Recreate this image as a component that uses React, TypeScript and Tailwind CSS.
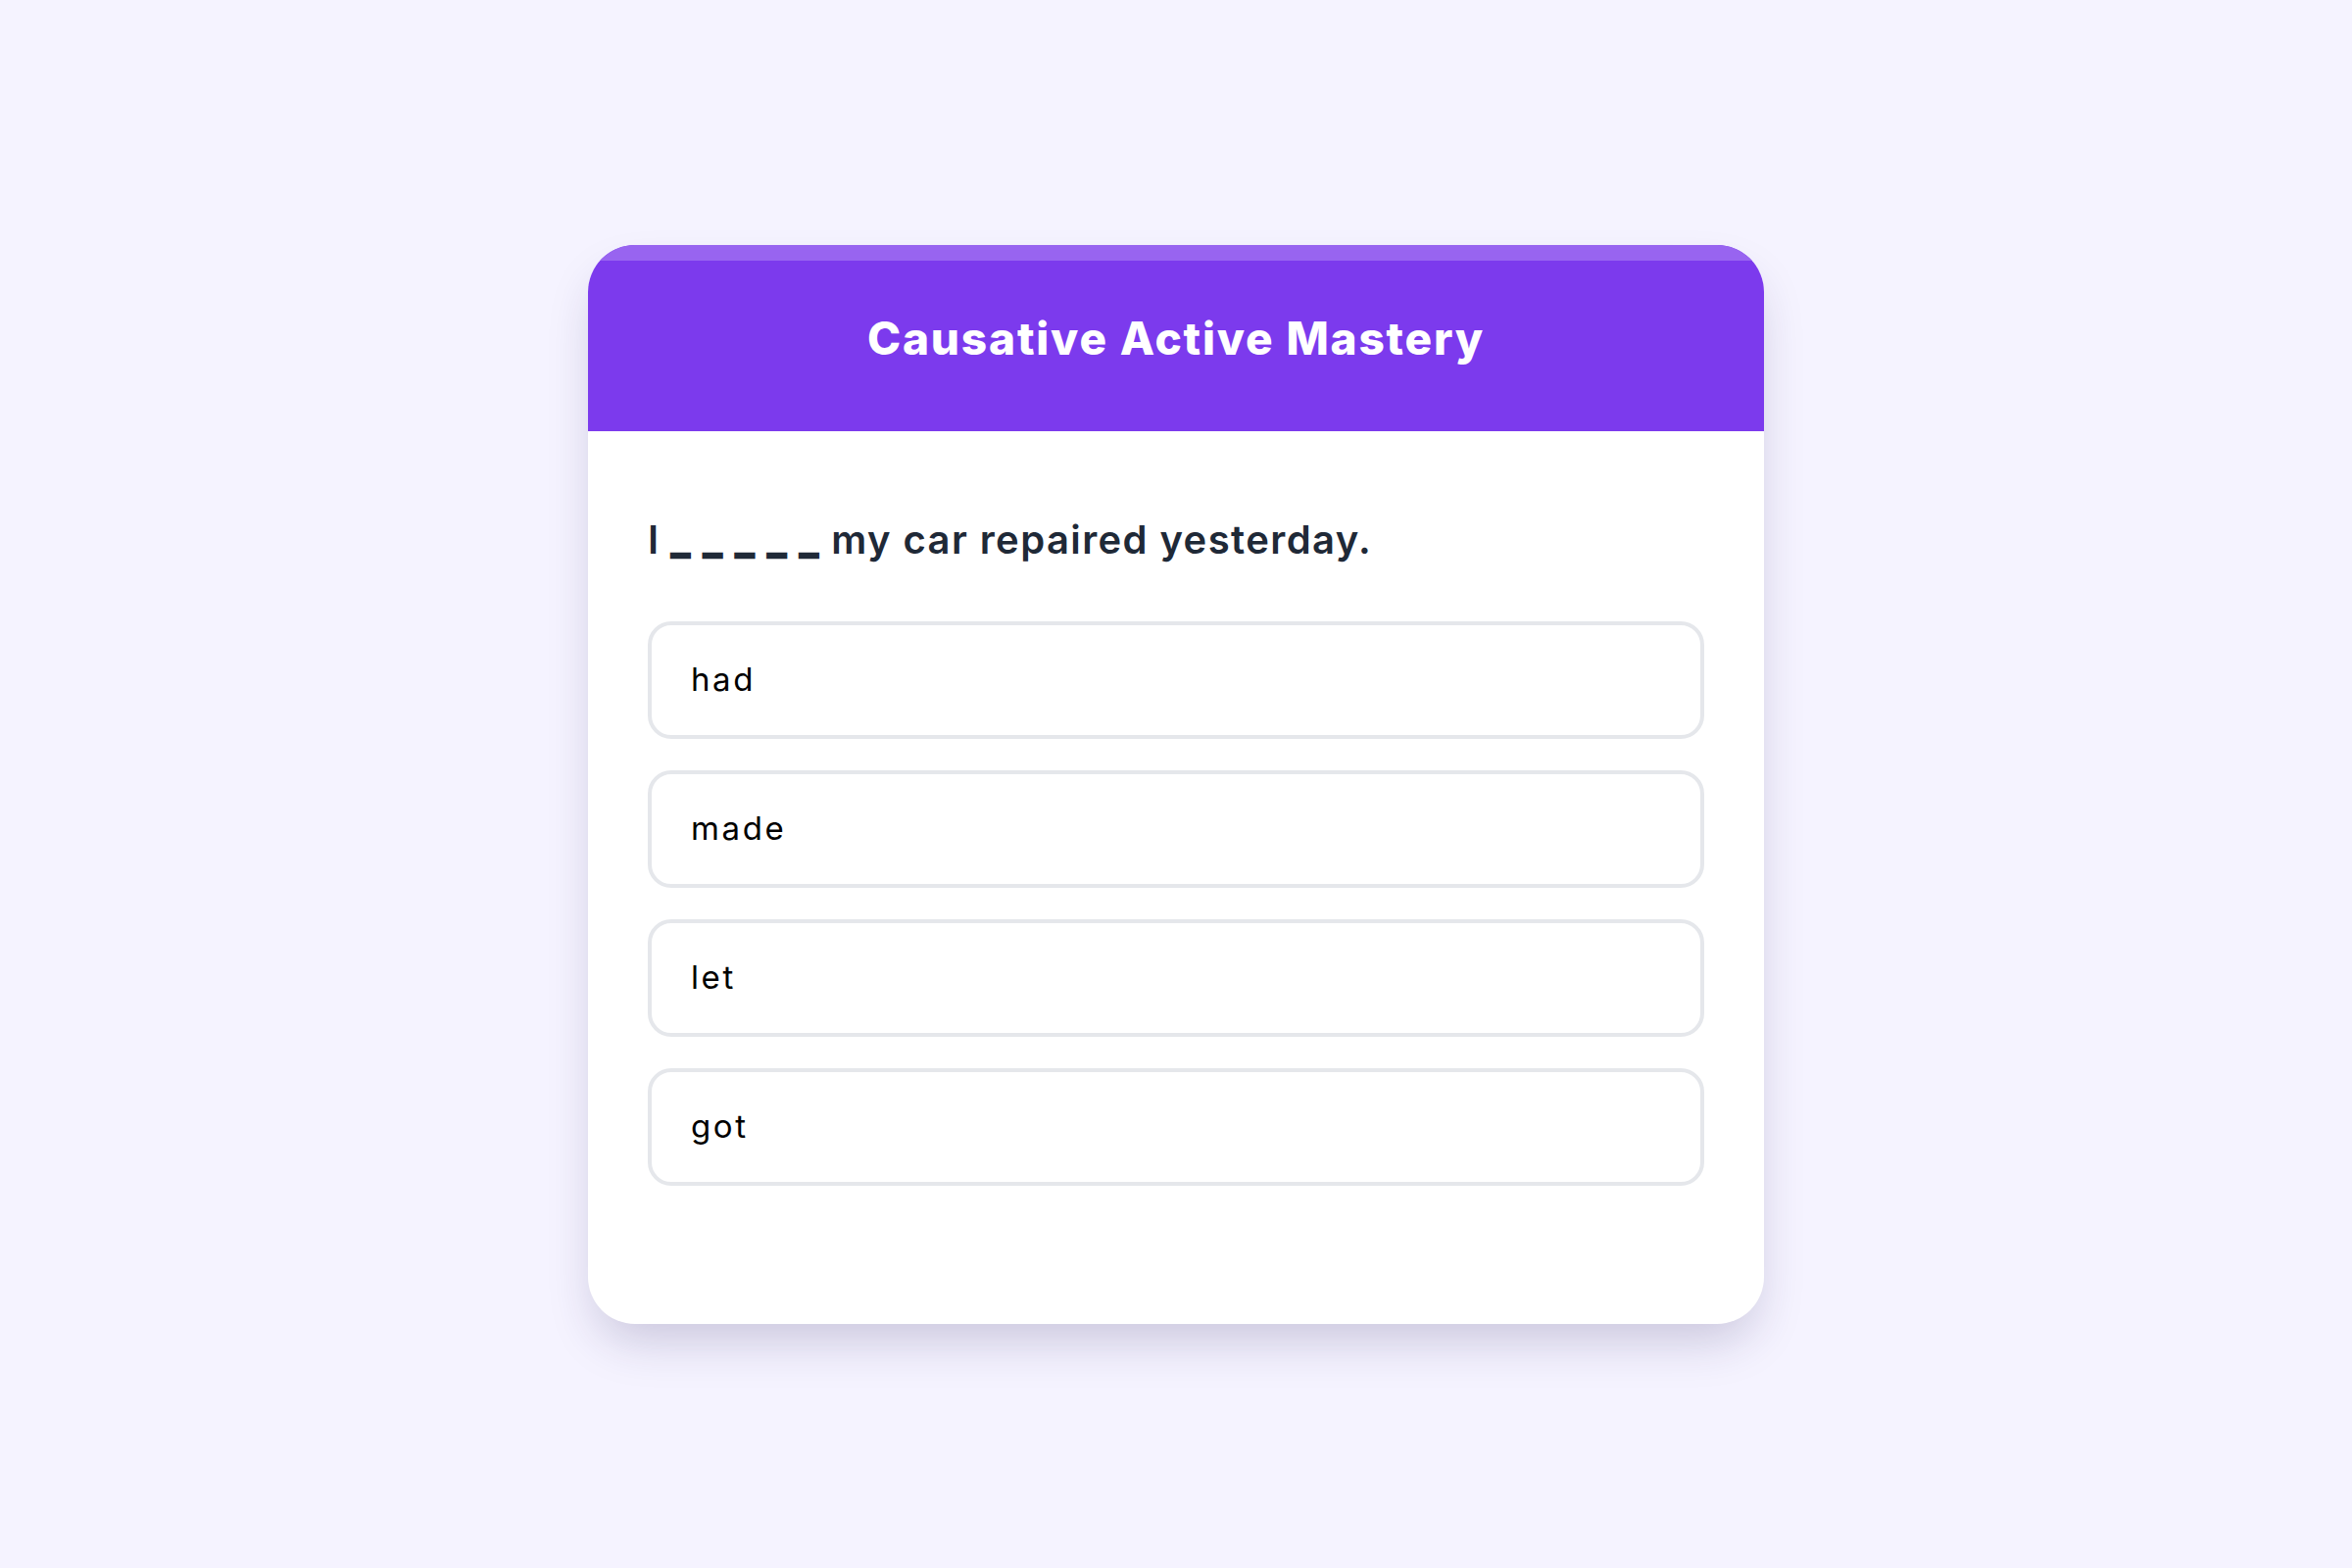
import React from "react";

const options = ["had", "made", "let", "got"];

export default function App() {
  return (
    <div
      className="min-h-screen w-full bg-[#f5f3ff] flex items-center justify-center"
      style={{ fontFamily: '"Inter", "Noto Sans", sans-serif' }}
    >
      <div className="w-[1200px] bg-white rounded-[48px] overflow-hidden shadow-[0_25px_50px_-10px_rgba(40,30,90,0.22)]">
        <div className="relative h-[190px] bg-[#7c3aed] flex items-center justify-center">
          <div className="absolute inset-x-0 top-0 h-4 bg-[#9864f0]" />
          <h1 className="text-white text-[46px] font-extrabold leading-none tracking-[1.8px]">
            Causative Active Mastery
          </h1>
        </div>
        <div className="px-[61px] pt-[87px] pb-[141px]">
          <p className="text-[#1f2937] text-[40px] font-semibold leading-[48px] mb-[59px] tracking-[1.4px]">
            I{" "}
            <span className="tracking-[14px] mr-[-12px] [-webkit-text-stroke:2.5px_#1f2937]">_____</span>
            {" "}my car repaired yesterday.
          </p>
          <div className="flex flex-col gap-[32px]">
            {options.map((o) => (
              <button
                key={o}
                className="h-[120px] w-full border-4 border-[#e5e7eb] rounded-[24px] bg-white px-[40px] flex items-center text-left text-black text-[33px] leading-none tracking-[2.6px]"
              >
                {o}
              </button>
            ))}
          </div>
        </div>
      </div>
    </div>
  );
}
